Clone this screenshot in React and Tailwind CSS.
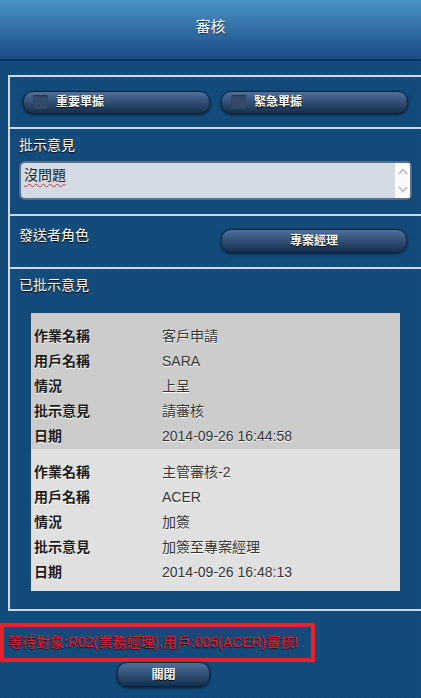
import { useState } from "react";

const font = { fontFamily: '"Liberation Sans", "Noto Sans CJK TC", Arial, sans-serif' };

const records = [
  {
    bg: "bg-[#cccccc]",
    rows: [
      ["作業名稱", "客戶申請"],
      ["用戶名稱", "SARA"],
      ["情況", "上呈"],
      ["批示意見", "請審核"],
      ["日期", "2014-09-26 16:44:58"],
    ],
  },
  {
    bg: "bg-[#e0e0e0]",
    rows: [
      ["作業名稱", "主管審核-2"],
      ["用戶名稱", "ACER"],
      ["情況", "加簽"],
      ["批示意見", "加簽至專案經理"],
      ["日期", "2014-09-26 16:48:13"],
    ],
  },
];

function DarkButton({ children, className = "" }) {
  return (
    <button
      className={`flex items-center rounded-[10px] border border-[#0d2240] bg-gradient-to-b from-[#50709b] to-[#14304f] text-[12px] font-bold text-white shadow-[0_1px_3px_rgba(0,0,0,0.6)] [text-shadow:0_1px_1px_#000] ${className}`}
    >
      {children}
    </button>
  );
}

function CheckButton({ label }) {
  return (
    <DarkButton className="h-[23px] w-[187px] pl-[9px]">
      <span className="mr-[8px] h-[14px] w-[15px] rounded-[2px] bg-[#33496a] shadow-[inset_0_1px_1px_rgba(0,0,0,0.3)]" />
      {label}
    </DarkButton>
  );
}

export default function App() {
  const [comment, setComment] = useState("沒問題");

  return (
    <div
      style={font}
      className="min-h-[698px] w-[421px] overflow-hidden bg-[#124a7b] bg-[image:repeating-conic-gradient(#0f4474_0_25%,#16517f_0_50%)] bg-[length:2px_2px]"
    >
      <header className="flex h-[61px] items-center justify-center border-b-2 border-[#0c3562] bg-gradient-to-b from-[#4b93c8] to-[#1c4b86] pb-[4px]">
        <h1 className="text-[15px] text-white [text-shadow:0_1px_1px_#123]">審核</h1>
      </header>

      <div className="ml-[8px] mt-[14px] w-[422px] border-2 border-[#c9d8e6]">
        <section className="flex h-[50px] items-center gap-[11px] pl-[13px]">
          <CheckButton label="重要單據" />
          <CheckButton label="緊急單據" />
        </section>

        <section className="h-[87px] border-t-2 border-[#c9d8e6] pl-[9px] pt-[7px]">
          <p className="text-[14px] leading-[18px] text-white [text-shadow:0_1px_1px_#000]">批示意見</p>
          <div className="relative mt-[7px] flex h-[39px] w-[393px] rounded-[6px] border-2 border-[#55718f] bg-[#d3dce5]">
            <textarea
              value={comment}
              onChange={(e) => setComment(e.target.value)}
              spellCheck={false}
              className="h-full flex-1 resize-none bg-transparent px-[3px] pt-[3px] text-[14px] leading-[18px] text-[#222] underline decoration-[#d33] decoration-wavy decoration-1 underline-offset-[3px] outline-none"
              style={font}
            />
            <div className="flex w-[15px] flex-col items-center justify-around bg-[#fafafa] text-[#b5b5b5]">
              <svg width="10" height="7" viewBox="0 0 10 7" fill="none" stroke="currentColor" strokeWidth="1.4">
                <path d="M1 6 L5 1.5 L9 6" />
              </svg>
              <svg width="10" height="7" viewBox="0 0 10 7" fill="none" stroke="currentColor" strokeWidth="1.4">
                <path d="M1 1 L5 5.5 L9 1" />
              </svg>
            </div>
          </div>
        </section>

        <section className="flex h-[53px] items-start border-t-2 border-[#c9d8e6] pl-[9px] pt-[10px]">
          <p className="w-[202px] text-[14px] leading-[18px] text-white [text-shadow:0_1px_1px_#000]">發送者角色</p>
          <DarkButton className="mt-[3px] h-[24px] w-[186px] justify-center">專案經理</DarkButton>
        </section>

        <section className="border-t-2 border-[#c9d8e6] pb-[18px] pl-[21px] pt-[7px]">
          <p className="-ml-[12px] text-[14px] leading-[18px] text-white [text-shadow:0_1px_1px_#000]">已批示意見</p>
          <div className="mt-[19px] w-[369px]">
            {records.map((rec, i) => (
              <div key={i} className={`${rec.bg} pl-[3px] pt-[11px] ${i === 1 ? "pb-[6px]" : ""}`}>
                {rec.rows.map(([k, v]) => (
                  <div key={k} className="flex h-[25px] items-center text-[14px]">
                    <span className="w-[128px] font-bold text-[#1a1a1a] [text-shadow:0_1px_0_#fff]">{k}</span>
                    <span className="text-[#333] [text-shadow:0_1px_0_#fff]">{v}</span>
                  </div>
                ))}
              </div>
            ))}
          </div>
        </section>
      </div>

      <div className="mt-[12px] flex h-[39px] w-[315px] items-center border-4 border-[#e5212b] pl-[4px]">
        <p className="whitespace-nowrap text-[14px] text-[#e0202c] [text-shadow:0_1px_1px_#400]">
          等待對象:R02(業務經理),用戶:005(ACER)審核!
        </p>
      </div>

      <div className="pl-[117px]">
        <DarkButton className="h-[25px] w-[93px] justify-center">關閉</DarkButton>
      </div>
    </div>
  );
}
